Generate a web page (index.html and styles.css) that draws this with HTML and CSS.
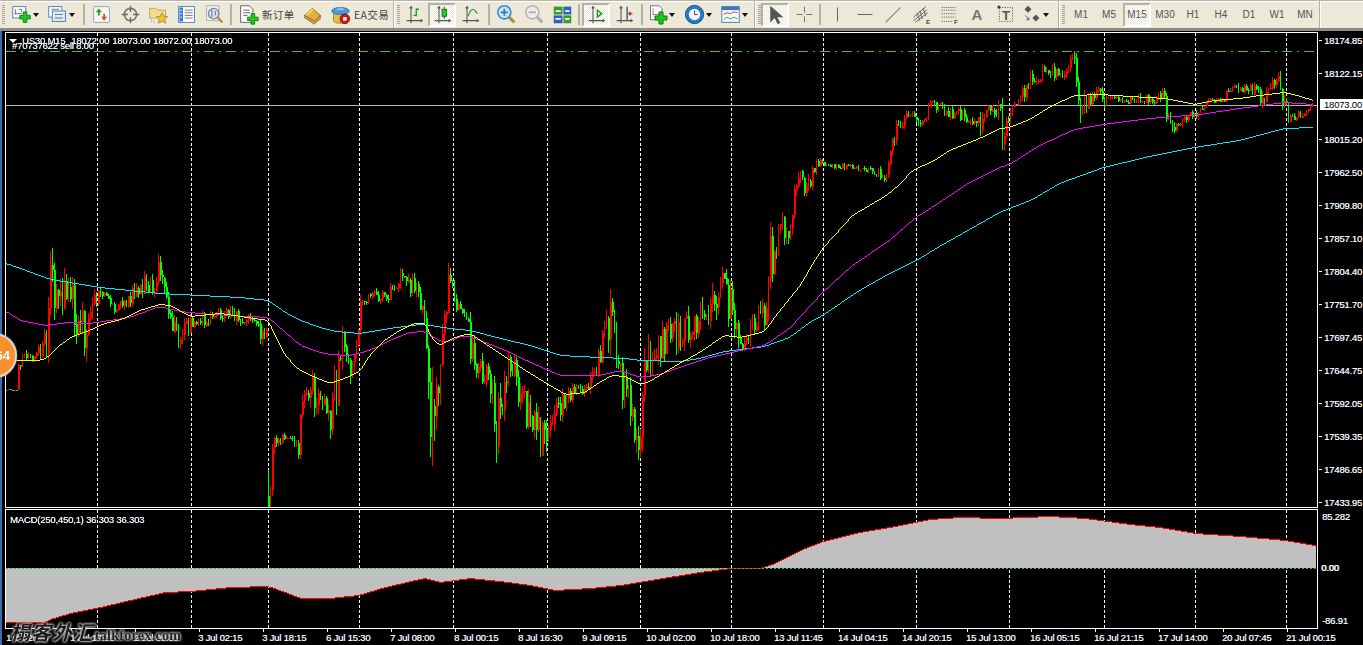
FILE: index.html
```html
<!DOCTYPE html>
<html lang="zh">
<head>
<meta charset="utf-8">
<title>US30,M15</title>
<link rel="stylesheet" href="styles.css">
</head>
<body>
<svg class="defs" width="0" height="0">
  <symbol id="plus" viewBox="0 0 14 14"><path d="M5 1h4v4h4v4H9v4H5V9H1V5h4z" fill="#22c322" stroke="#0a7a0a" stroke-width="1"/></symbol>
  <symbol id="axes" viewBox="0 0 24 24"><path d="M8 3v19M3 19h18M6.500 5 8 3l1.500 2M19 17.500l2 1.500-2 1.500" fill="none" stroke="#555" stroke-width="1.200"/></symbol>
</svg>
<header class="toolbar">
  <div class="band band-one">
    <span class="grip"></span>
    <button class="tool drop"><svg class="ico" viewBox="0 0 24 24"><rect x="2" y="3" width="15" height="13" fill="#fff" stroke="#3c78b4"/><path d="M5 6v6M4 11h9M9 6h3v3" stroke="#667" fill="none"/><use href="#plus" x="9" y="8" width="14" height="14"/></svg><i class="caret"></i></button>
    <button class="tool drop"><svg class="ico" viewBox="0 0 24 24"><rect x="2" y="3" width="15" height="12" fill="#fff" stroke="#3c78b4"/><rect x="6" y="8" width="15" height="12" fill="#dfeaf6" stroke="#3c78b4"/><path d="M5 6h9M9 12h9M9 16h9" stroke="#667"/></svg><i class="caret"></i></button>
    <span class="sep"></span>
    <button class="tool"><svg class="ico" viewBox="0 0 24 24"><rect x="3" y="3" width="18" height="18" rx="1" fill="#f8f8f4" stroke="#7f9db9"/><path d="M9 5 5.500 9.500H8V13h2V9.500h2.500z" fill="#1fa01f"/><path d="M15 19l3.500-4.500H16V11h-2v3.500h-2.500z" fill="#d8502a"/></svg></button>
    <button class="tool push"><svg class="ico" viewBox="0 0 24 24"><circle cx="12" cy="12" r="7" fill="none" stroke="#777" stroke-width="1.800"/><path d="M12 2v7M12 15v7M2 12h7M15 12h7" stroke="#666" stroke-width="1.500"/></svg></button>
    <button class="tool"><svg class="ico" viewBox="0 0 24 24"><path d="M2 5h7l2 2h9v9H2z" fill="#f4dc8c" stroke="#b0a060"/><path d="M16 10l2 4 4.500.5-3.300 3 1 4.500-4.200-2.300L11.800 22l1-4.500-3.300-3 4.500-.5z" fill="#f2c230" stroke="#a08020" stroke-width=".8"/><path d="M4 18v4M7 19v3" stroke="#999" stroke-dasharray="1 1"/></svg></button>
    <button class="tool"><svg class="ico" viewBox="0 0 24 24"><rect x="3" y="3" width="18" height="18" fill="#fff" stroke="#3c78b4"/><rect x="4" y="4" width="4" height="16" fill="#3c78c8"/><path d="M10 7h9M10 10h9M10 13h9M10 16h9" stroke="#667"/><path d="M5 7h2M5 11h2M5 15h2" stroke="#fff"/></svg></button>
    <button class="tool"><svg class="ico" viewBox="0 0 24 24"><rect x="3" y="2" width="14" height="17" fill="#f0f0f0" stroke="#a8a8a8"/><circle cx="11" cy="11" r="6" fill="#d5e3ee" stroke="#7a8a9a" stroke-width="1.500"/><path d="M9 6v9M13 8v5" stroke="#667"/><path d="M15.500 15.500 21 21" stroke="#b09040" stroke-width="2.500"/></svg></button>
    <span class="sep"></span>
    <button class="tool"><svg class="ico" viewBox="0 0 24 24"><path d="M3 2h10l4 4v15H3z" fill="#fff" stroke="#555"/><path d="M6 7h7M6 10h8M6 13h5" stroke="#555"/><use href="#plus" x="10" y="10" width="14" height="14"/></svg></button>
    <span class="tool-label">新订单</span>
    <button class="tool"><svg class="ico" viewBox="0 0 24 24"><path d="M3 13 12 5l9 8-7 7z" fill="#e8b030" stroke="#80601c"/><path d="M12 5 4 12l1 2 8-7z" fill="#f6d678"/><path d="M3 13v3l11 7 7-6v-4l-7 7z" fill="#c8a060" stroke="#80601c" stroke-width=".7"/></svg></button>
    <button class="tool"><svg class="ico" viewBox="0 0 24 24"><path d="M4 11v8c0 2 4 3 8 3s7-1 7-3v-8z" fill="#e8c040" stroke="#a08020"/><ellipse cx="12" cy="8" rx="10" ry="4" fill="#4a98d8" stroke="#2870b0"/><path d="M7 7c1-4 8-4 10 0z" fill="#88bce8"/><circle cx="17" cy="17" r="5.500" fill="#d01818" stroke="#801010"/><rect x="15" y="15" width="4" height="4" fill="#fff"/></svg></button>
    <span class="tool-label">EA交易</span>
  </div>
  <div class="band band-two">
    <span class="grip"></span>
    <button class="tool"><svg class="ico" viewBox="0 0 24 24"><use href="#axes" width="24" height="24"/><path d="M14 5v9M14 6h3M11 13h3" stroke="#12a012" stroke-width="1.500" fill="none"/></svg></button>
    <button class="tool on"><svg class="ico" viewBox="0 0 24 24"><use href="#axes" width="24" height="24"/><path d="M14 3v14" stroke="#333"/><rect x="11.500" y="6" width="5" height="8" fill="#22d022" stroke="#106010"/></svg></button>
    <button class="tool"><svg class="ico" viewBox="0 0 24 24"><use href="#axes" width="24" height="24"/><path d="M9 14c2-5 4-8 6-8s3 3 5 5" fill="none" stroke="#1a9a3a" stroke-width="1.300"/></svg></button>
    <span class="sep sep-wide"></span>
    <button class="tool"><svg class="ico" viewBox="0 0 24 24"><path d="M14 14l7 7" stroke="#b09030" stroke-width="3.500"/><circle cx="9.500" cy="9.500" r="7.500" fill="#c9e4f8" stroke="#3a8ac8" stroke-width="1.800"/><path d="M5.500 9.500h8M9.500 5.500v8" stroke="#2a78c0" stroke-width="2"/></svg></button>
    <button class="tool"><svg class="ico" viewBox="0 0 24 24"><path d="M14 14l7 7" stroke="#b0b0b0" stroke-width="3.500"/><circle cx="9.500" cy="9.500" r="7.500" fill="#ececec" stroke="#b4b4b4" stroke-width="1.800"/><path d="M5.500 9.500h8" stroke="#aaa" stroke-width="2"/></svg></button>
    <button class="tool"><svg class="ico" viewBox="0 0 24 24"><rect x="2" y="3" width="10" height="9" fill="#3a9a2a"/><rect x="13" y="3" width="9" height="9" fill="#2a62c0"/><rect x="2" y="13" width="10" height="9" fill="#2a62c0"/><rect x="13" y="13" width="9" height="9" fill="#3a9a2a"/><path d="M4 8h6M15 8h5M4 17h6M15 17h5" stroke="#fff" stroke-width="2"/></svg></button>
    <span class="sep"></span>
    <button class="tool on"><svg class="ico" viewBox="0 0 24 24"><use href="#axes" width="24" height="24"/><path d="M13 7v8l5-4z" fill="none" stroke="#12a012" stroke-width="1.500"/></svg></button>
    <button class="tool"><svg class="ico" viewBox="0 0 24 24"><use href="#axes" width="24" height="24"/><path d="M15 3v15" stroke="#205080" stroke-width="1.500"/><path d="M17 11h4M19 9l-2 2 2 2" stroke="#c03010" stroke-width="1.500" fill="none"/></svg></button>
    <span class="sep sep-tight"></span>
    <button class="tool drop drop-wide"><svg class="ico" viewBox="0 0 24 24"><path d="M4 2h10l3 3v13H4z" fill="#fff" stroke="#666"/><path d="M7 5v8M7 12h7" stroke="#777"/><use href="#plus" x="8" y="8" width="16" height="16"/></svg><i class="caret"></i></button>
    <button class="tool drop"><svg class="ico" viewBox="0 0 24 24"><circle cx="12" cy="12" r="10.500" fill="#2a78c8" stroke="#185090"/><circle cx="12" cy="12" r="6.500" fill="#eef6fc"/><path d="M12 7.500V12h3.500" stroke="#333" fill="none"/></svg><i class="caret"></i></button>
    <button class="tool drop"><svg class="ico" viewBox="0 0 24 24"><rect x="2" y="3" width="20" height="18" fill="#f4f8fc" stroke="#3c78b4"/><rect x="2" y="3" width="20" height="4" fill="#3c78c0"/><path d="M4 12l4-2 4 1 4-2 4 1" stroke="#b04020" fill="none"/><path d="M4 18l4-3 4 2 4-2 4 2" stroke="#20a040" fill="none"/></svg><i class="caret"></i></button>
  </div>
  <div class="band band-three">
    <span class="grip"></span>
    <button class="tool on"><svg class="ico" viewBox="0 0 24 24"><path d="M6 2v19l5-5 3.500 7 3-1.500-3.500-6.500h7z" fill="#555"/></svg></button>
    <button class="tool push"><svg class="ico" viewBox="0 0 24 24"><path d="M12 3v7M12 14v7M3 12h7M14 12h7" stroke="#666"/></svg></button>
    <span class="sep sep-narrow"></span>
    <button class="tool"><svg class="ico" viewBox="0 0 24 24"><path d="M12 4v16" stroke="#666" stroke-width="1.200"/></svg></button>
    <button class="tool"><svg class="ico" viewBox="0 0 24 24"><path d="M3 12h17" stroke="#666" stroke-width="1.200"/></svg></button>
    <button class="tool"><svg class="ico" viewBox="0 0 24 24"><path d="M3 21 20 4" stroke="#777" stroke-width="1.200"/></svg></button>
    <button class="tool"><svg class="ico" viewBox="0 0 24 24"><path d="M3 15 17 3M3 19 18 7M5 21 19 10M7 10l3 9M10 8l3 9M14 5l3 9" stroke="#555" fill="none"/><text class="ico-letter" x="17" y="23">E</text></svg></button>
    <button class="tool"><svg class="ico" viewBox="0 0 24 24"><path d="M3 4h16M3 7h16M3 11h16M3 15h16M3 20h12" stroke="#666" stroke-dasharray="1.500 1"/><text class="ico-letter" x="17" y="23">F</text></svg></button>
    <button class="tool tool-a">A</button>
    <button class="tool"><svg class="ico" viewBox="0 0 24 24"><rect x="5" y="4" width="15" height="16" fill="none" stroke="#555" stroke-dasharray="1.500 1.500"/><text class="ico-t" x="8" y="18">T</text><rect x="3" y="2" width="3" height="3" fill="#333"/></svg></button>
    <button class="tool drop"><svg class="ico" viewBox="0 0 24 24"><path d="M8 2l4 4-4 4-4-4zM17 12l4 4-4 4-4-4z" fill="#555"/><path d="M5 13l4 5M9 18v-3M9 18H6" stroke="#555" fill="none"/></svg><i class="caret"></i></button>
  </div>
  <div class="band band-periods">
    <span class="grip"></span>
    <button class="tool period">M1</button>
    <button class="tool period">M5</button>
    <button class="tool period on">M15</button>
    <button class="tool period">M30</button>
    <button class="tool period">H1</button>
    <button class="tool period">H4</button>
    <button class="tool period">D1</button>
    <button class="tool period">W1</button>
    <button class="tool period">MN</button>
  </div>
</header>
<main class="workspace">
  <div class="left-edge"></div>
  <div class="panes">
    <section class="pane pane-main">
      <canvas id="priceCanvas" width="1311" height="474"></canvas>
      <div class="legend"><i class="legend-mark"></i>US30,M15&nbsp; 18072.00 18073.00 18072.00 18073.00</div>
      <div class="order-note">#70737622 sell 8.00</div>
    </section>
    <section class="pane pane-macd">
      <canvas id="macdCanvas" width="1311" height="118"></canvas>
      <div class="macd-legend">MACD(250,450,1) 36.303 36.303</div>
    </section>
    <div class="time-axis">
      <span>1 Jul 2015</span><span>1 Jul 17:00</span><span>2 Jul 09:30</span><span>3 Jul 02:15</span><span>3 Jul 18:15</span><span>6 Jul 15:30</span><span>7 Jul 08:00</span><span>8 Jul 00:15</span><span>8 Jul 16:30</span><span>9 Jul 09:15</span><span>10 Jul 02:00</span><span>10 Jul 18:00</span><span>13 Jul 11:45</span><span>14 Jul 04:15</span><span>14 Jul 20:15</span><span>15 Jul 13:00</span><span>16 Jul 05:15</span><span>16 Jul 21:15</span><span>17 Jul 14:00</span><span>20 Jul 07:45</span><span>21 Jul 00:15</span>
    </div>
  </div>
  <aside class="price-axis">
    <div class="price-ticks">
      <span>18174.85</span><span>18122.15</span><span class="blank"></span><span>18015.20</span><span>17962.50</span><span>17909.80</span><span>17857.10</span><span>17804.40</span><span>17751.70</span><span>17697.45</span><span>17644.75</span><span>17592.05</span><span>17539.35</span><span>17486.65</span><span>17433.95</span>
    </div>
    <div class="macd-ticks">
      <span class="macd-high">85.282</span><span class="macd-zero">0.00</span><span class="macd-low">-86.91</span>
    </div>
    <div class="current-price">18073.00</div>
  </aside>
  <div class="badge">64</div>
  <div class="watermark"><span class="wm-cjk">榻客外汇</span><span class="wm-latin">.talkforex.com</span></div>
</main>
<script src="chart.js"></script>
</body>
</html>
```
FILE: styles.css
```css
* { box-sizing: border-box; }
html, body { margin: 0; height: 100%; overflow: hidden; background: #000; }
body { width: 1363px; height: 645px; font-family: "Liberation Sans", Arial, sans-serif; }
.defs { position: absolute; }

.toolbar {
  display: flex;
  height: 31px;
  background: #ece9d8;
  border-top: 1px solid #b8b6aa;
  border-bottom: 3px solid #8e8d85;
  box-shadow: inset 0 1px 0 #fff;
}
.band { display: flex; align-items: center; flex: none; height: 27px; border-right: 1px solid #b4b2a2; box-shadow: 1px 0 0 #fff; }
.band-one { width: 394px; padding-left: 2px; }
.band-two { width: 361px; padding-left: 2px; }
.band-three { width: 304px; padding-left: 2px; }
.band-periods { width: 261px; padding-left: 2px; }
.grip { flex: none; width: 3px; height: 20px; background: repeating-linear-gradient(#a8a698 0 1px, transparent 1px 2px); }
.band-one .grip { margin-right: 4px; }
.band-two .grip { margin: 0 0 0 1px; }
.band-three .grip { margin: 0 0 0 1px; }
.band-periods .grip { margin: 0 2px 0 1px; }

.tool {
  display: flex;
  align-items: center;
  justify-content: center;
  flex: none;
  width: 28px;
  height: 24px;
  padding: 0;
  background: none;
  border: 0;
  font: inherit;
  color: #444;
}
.tool.push { margin-left: 1px; }
.tool.drop { width: 36px; justify-content: flex-start; }
.tool.drop-wide { width: 37px; }
.drop .ico { margin-left: 2px; }
.tool.on {
  border: 2px solid;
  border-color: #b4b2a2 #fff #fff #b4b2a2;
  background: repeating-conic-gradient(#fff 0 25%, #ece9d8 0 50%) 0 0 / 2px 2px;
}
.ico { display: block; flex: none; width: 21px; height: 21px; }
.caret { width: 0; height: 0; margin-left: 1px; border: 3.500px solid transparent; border-top: 4px solid #111; border-bottom: 0; }
.sep { flex: none; width: 2px; height: 21px; margin: 0 2px; background: #b5b3a3; }
.sep-wide { margin-left: 4px; }
.sep-tight { margin: 0 2px 0 3px; }
.sep-narrow { margin: 0 2px 0 1px; }
.tool-label { flex: none; width: 35px; font: 10.500px "Noto Sans CJK SC", "Liberation Sans", sans-serif; letter-spacing: .4px; color: #444; white-space: nowrap; }
.band-one .tool-label + .tool { margin-left: 1px; }
.period { font-size: 10px; color: #555; }
.tool-a { font-size: 15px; font-weight: bold; color: #777; }
.ico-letter { font: bold 7px "Liberation Sans", sans-serif; fill: #444; }
.ico-t { font: bold 15px "Liberation Sans", sans-serif; fill: #555; }

.workspace { position: relative; display: flex; height: 614px; background: #000; color: #fff; font-size: 9.500px; line-height: 11px; letter-spacing: -.2px; text-shadow: .4px 0 0 rgba(190, 225, 255, .75); }
.left-edge { flex: none; width: 5px; border-left: 2px solid #3b6ea8; }
.panes { flex: none; width: 1313px; padding-top: 1px; }
.pane { position: relative; border: 1px solid #fff; }
.pane canvas { display: block; }
.pane-main { height: 476px; margin-bottom: 1px; }
.pane-macd { height: 120px; }
.legend { position: absolute; left: 3px; top: 2px; word-spacing: .5px; white-space: nowrap; }
.legend-mark { display: inline-block; width: 0; height: 0; margin-right: 5px; vertical-align: 1px; border: 4px solid transparent; border-top: 4px solid #fff; border-bottom: 0; }
.order-note { position: absolute; left: 6px; top: 7px; white-space: nowrap; }
.macd-legend { position: absolute; left: 4px; top: 4px; white-space: nowrap; }

.time-axis { display: flex; padding: 3px 0 0 1px; }
.time-axis span { position: relative; flex: none; width: 64px; white-space: nowrap; }
.time-axis span + span::before { content: ""; position: absolute; left: 1px; top: -3px; width: 1px; height: 3px; background: #fff; }

.price-axis { position: relative; flex: none; width: 45px; }
.price-ticks { display: flex; flex-direction: column; gap: 22px; padding-top: 4px; }
.price-ticks span { position: relative; display: block; height: 11px; padding-left: 6px; white-space: nowrap; }
.price-ticks span:not(.blank)::before { content: ""; position: absolute; left: 1px; top: 5px; width: 3px; height: 1px; background: #fff; }
.macd-ticks { display: flex; flex-direction: column; }
.macd-ticks span { display: block; height: 11px; }
.macd-high { margin-top: 3px; padding-left: 4px; }
.macd-zero { margin-top: 40px; padding-left: 3px; text-shadow: .7px 0 0 #fff; }
.macd-low { margin-top: 42px; padding-left: 4px; }
.current-price { position: absolute; left: 2px; right: 0; top: 68px; height: 11px; padding-left: 4px; background: #fff; color: #000; text-shadow: none; }

.badge {
  position: absolute;
  left: -28px;
  top: 302px;
  width: 45px;
  height: 45px;
  padding-right: 5px;
  border: 2px solid #d8d8d8;
  border-radius: 50%;
  background: #f8902e;
  color: #fff;
  font: bold 13px/41px "Liberation Sans", sans-serif;
  letter-spacing: 0;
  text-shadow: none;
  text-align: right;
  box-shadow: 0 0 2px #888;
}
.watermark { position: absolute; left: 10px; top: 586px; display: flex; align-items: flex-end; height: 27px; color: #1c1c1c; white-space: nowrap; letter-spacing: 0; text-shadow: 0 0 2px #eee, 0 0 3px #ccc, 0 0 3px #999; }
.wm-cjk { font: italic bold 20px/25px "Noto Sans CJK SC", sans-serif; letter-spacing: 1px; }
.wm-latin { margin-left: -3px; font: bold 14px/17px "Liberation Serif", serif; color: #222; letter-spacing: .3px; }
```
FILE: chart.js
```js
(function () {
  var OX = 6, OY = 33, MY = 510;

  var grid = [97, 191, 268, 359, 453, 547, 640, 731, 823, 916, 1009, 1104, 1195, 1286];

  // [x, centre y, noise]
  var price = [[6,390,.4],[16,390,.4],[18,362,3],[25,358,3],[40,352,3],[46,340,6],[50,290,9],[55,305,8],[60,300,8],[67,290,7],[70,285,6],[75,320,8],[80,325,8],[85,340,8],[92,310,6],[96,295,4],[105,298,3],[115,308,3],[125,303,3],[135,290,4],[145,285,4],[155,280,5],[161,268,5],[165,285,5],[168,310,5],[178,340,5],[185,330,4],[195,318,3],[210,320,3],[225,312,3],[240,318,3],[255,325,4],[262,340,5],[267,335,3],
    [268,470,14],[272,455,5],[277,437,3],[285,436,2],[294,446,3],[298,450,3],[300,420,4],[305,400,6],[312,388,6],[318,398,6],[325,412,5],[330,422,6],[335,380,10],[340,345,7],[345,352,5],[350,385,6],[355,350,8],[360,310,5],[365,298,2],[375,296,3],[385,296,3],[395,288,3],[400,272,5],[405,277,5],[410,285,4],[420,300,5],[425,320,6],[428,380,10],[431,455,16],[435,420,10],[440,350,8],[445,310,6],[449,288,7],[455,303,4],[460,312,3],[468,320,3],[470,345,6],[475,365,5],[485,372,5],[492,392,6],[495,430,9],[505,382,7],[510,362,5],[520,392,7],[527,412,7],[535,420,6],[541,450,9],[550,432,6],[556,422,7],[565,397,4],[575,392,3],[590,380,4],[600,352,5],[610,325,9],[615,345,6],[620,372,6],[625,398,7],[632,412,6],[638,440,8],[642,402,8],[645,352,7],[655,355,6],[665,337,6],[675,337,6],[685,332,6],[695,316,7],[705,332,7],[712,303,7],[725,288,7],[730,312,8],[735,345,8],[745,346,3],[752,322,5],[760,308,5],[764,322,5],[768,262,8],[775,250,6],[778,228,5],[785,226,5],[790,232,4],[795,182,6],[802,186,5],[808,192,5],[815,166,3],[820,161,2],[830,165,1.500],[850,167,1.500],[870,170,2],[885,178,3],[888,160,4],[893,135,4],[900,125,3],[905,115,3],[912,112,2],[920,130,3],[930,105,3],[945,111,3],[960,116,3],[975,119,3],[982,130,5],[985,105,3],[1000,110,4],[1002,140,7],[1007,120,4],[1012,106,3],[1020,100,3],[1030,76,4],[1045,73,3],[1060,73,3],[1073,62,4],[1076,80,5],[1080,106,5],[1090,101,3],[1100,85,3],[1102,101,3],[1110,98,2],[1130,100,2],[1150,100,3],[1163,92,3],[1168,125,5],[1175,128,3],[1190,115,2],[1198,110,3],[1205,102,2],[1220,100,2],[1235,88,3],[1245,91,3],[1258,88,3],[1262,105,5],[1268,85,4],[1278,75,4],[1285,110,5],[1290,118,2],[1300,115,2],[1308,110,2],[1313,105,2]];

  var yellow = [[16,360],[40,360],[48,357],[60,345],[73,336],[90,330],[105,323],[125,318],[140,310],[160,304],[170,305],[190,316],[220,313],[268,320],[275,335],[285,355],[297,368],[315,377],[330,383],[345,378],[360,371],[370,355],[385,340],[400,330],[415,323],[425,323],[433,340],[440,345],[455,337],[470,333],[480,340],[495,350],[510,360],[525,370],[548,384],[565,394],[585,392],[600,382],[612,375],[625,376],[640,384],[650,381],[665,372],[680,363],[700,352],[725,335],[740,337],[750,335],[765,331],[775,317],[790,298],[800,286],[815,260],[823,248],[853,215],[887,195],[900,184],[913,170],[935,160],[950,150],[980,138],[1000,128],[1010,127],[1030,119],[1053,105],[1075,95],[1100,94],[1130,96],[1165,98],[1180,101],[1195,104],[1215,100],[1240,98],[1260,95],[1285,92],[1300,96],[1313,100]];

  var magenta = [[6,311],[20,320],[45,325],[70,322],[90,323],[110,320],[130,317],[160,306],[180,311],[210,314],[268,317],[285,332],[300,345],[320,352],[330,354],[350,355],[370,350],[390,340],[410,332],[425,331],[438,340],[445,342],[465,335],[480,340],[510,352],[530,362],[560,375],[600,375],[620,370],[640,377],[660,374],[680,367],[710,357],[750,348],[765,345],[790,328],[823,292],[853,265],[890,240],[915,218],[943,200],[970,182],[1000,167],[1010,164],[1040,145],[1075,129],[1110,123],[1150,118],[1200,114],[1240,108],[1285,102],[1313,104]];

  var cyan = [[6,263],[20,268],[50,279],[75,283],[100,287],[130,290],[160,293],[200,295],[240,297],[268,300],[285,312],[300,320],[320,327],[335,331],[360,333],[390,328],[420,324],[430,325],[450,328],[470,330],[500,338],[530,345],[560,355],[600,357],[625,358],[640,360],[680,361],[700,358],[725,351],[765,346],[790,337],[810,322],[823,315],[860,290],[890,273],[917,260],[940,246],[1000,212],[1033,199],[1060,183],[1104,167],[1150,156],[1195,147],[1240,140],[1285,128],[1313,127]];

  var macd = [[6,622],[45,622],[50,619],[70,613],[100,607],[130,600],[165,592],[190,591],[230,587],[268,586],[285,592],[300,598],[330,598],[358,595],[385,587],[415,580],[425,578],[440,582],[470,578],[500,581],[530,585],[555,590],[590,588],[620,585],[650,580],[700,572],[730,568],[760,568],[775,563],[800,550],[823,541],[860,532],[895,526],[930,519],[960,517],[1000,518],[1050,516],[1085,518],[1130,524],[1160,527],[1195,533],[1240,536],[1285,540],[1315,545]];

  function at(points, x, idx) {
    if (x <= points[0][0]) return points[0][idx];
    for (var i = 1; i < points.length; i++) {
      if (x <= points[i][0]) {
        var a = points[i - 1], b = points[i];
        return a[idx] + (b[idx] - a[idx]) * (x - a[0]) / (b[0] - a[0]);
      }
    }
    return points[points.length - 1][idx];
  }

  function smooth(points, radius) {
    var start = points[0][0], end = points[points.length - 1][0], out = [];
    for (var x = start; x <= end; x++) {
      var sum = 0, n = 0;
      for (var o = -radius; o <= radius; o++) {
        sum += at(points, Math.max(start, Math.min(end, x + o)), 1);
        n++;
      }
      out.push([x, sum / n]);
    }
    return out;
  }

  var seed = 20150721;
  function rnd() {
    seed = (seed * 1664525 + 1013904223) >>> 0;
    return seed / 4294967296;
  }

  function drawGrid(ctx, top, bottom, originY) {
    ctx.fillStyle = "#fff";
    grid.forEach(function (gx) {
      for (var y = top; y < bottom; y += 5) ctx.fillRect(gx - OX, y - originY, 1, 3);
    });
  }

  function drawLine(ctx, points, colour) {
    ctx.fillStyle = colour;
    for (var i = 0; i < points.length - 1; i++) {
      var a = Math.round(points[i][1]), b = Math.round(points[i + 1][1]);
      ctx.fillRect(points[i][0] - OX, Math.min(a, b) - OY, 1, Math.max(1, Math.abs(a - b)));
    }
  }

  // Main pane
  var p = document.getElementById("priceCanvas").getContext("2d");
  drawGrid(p, 33, 507, OY);

  p.fillStyle = "#36c236";
  var pattern = [10, 5, 2, 5], px = 6, k = 0;
  while (px < 1311) {
    if (k % 2 === 0) p.fillRect(px - OX, 51 - OY, pattern[k], 1);
    px += pattern[k];
    k = (k + 1) % 4;
  }

  p.fillStyle = "#b4b4b4";
  p.fillRect(0, 105 - OY, 1311, 1);

  var prev = at(price, 6, 1);
  for (var x = 6; x < 1314; x += 2) {
    var centre = at(price, x, 1), base = at(price, x, 2);
    var amp = base * (1 + base / 7);
    if (x === 268) prev = 496;
    var close = centre + (rnd() - 0.5) * amp * 3;
    var open = prev;
    var high = Math.min(open, close) - rnd() * amp * 0.9;
    var low = Math.max(open, close) + rnd() * amp * 0.9;
    var colour = close < open ? "#ff0000" : "#00ff00";
    var bodyTop = Math.round(Math.min(open, close));
    var bodyH = Math.max(1, Math.round(Math.abs(open - close)));
    var wide = rnd() > 0.3 ? 2 : 1;
    p.fillStyle = colour;
    p.fillRect(x - OX, Math.round(high) - OY, 1, Math.max(1, Math.round(low - high)));
    p.fillRect(x - OX, bodyTop - OY, wide, bodyH);
    prev = close;
  }

  drawLine(p, smooth(cyan, 4), "#00e8ff");
  drawLine(p, smooth(magenta, 4), "#ff00ff");
  drawLine(p, smooth(yellow, 3), "#ffff00");

  // MACD pane
  var m = document.getElementById("macdCanvas").getContext("2d");
  drawGrid(m, MY, 628, MY);
  var zero = 568, hist = smooth(macd, 3);
  hist.forEach(function (pt) {
    var c = pt[0], v = Math.round(pt[1]);
    m.fillStyle = "#c0c0c0";
    if (v < zero) m.fillRect(c - OX, v - MY, 1, zero - v);
    else m.fillRect(c - OX, zero - MY, 1, v - zero);
    m.fillStyle = "#ff0000";
    m.fillRect(c - OX, v - MY, 1, 1);
  });
  m.fillStyle = "#28c828";
  for (var d = 6; d < 1316; d += 4) m.fillRect(d - OX, zero - MY, 2, 1);
})();
```
